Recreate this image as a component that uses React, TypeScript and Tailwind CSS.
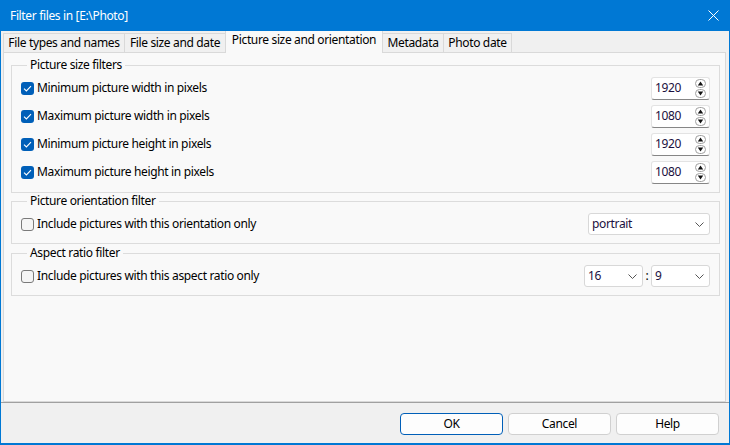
import React from "react"

const font = { fontFamily: '"Noto Sans", "Open Sans", sans-serif' }

function CheckBox({ checked }: { checked: boolean }) {
  return checked ? (
    <span className="flex h-[13px] w-[13px] shrink-0 items-center justify-center rounded-[3px] bg-[#005fb8]">
      <svg width="9" height="7" viewBox="0 0 9 7">
        <path d="M1 3.6 L3.4 6 L8 1.2" fill="none" stroke="white" strokeWidth="1.1" />
      </svg>
    </span>
  ) : (
    <span className="h-[13px] w-[13px] shrink-0 rounded-[3px] border border-[#7a7a7a] bg-[#f5f5f5]" />
  )
}

function SpinBox({ value }: { value: string }) {
  return (
    <div className="flex h-[23px] w-[59px] items-center justify-between rounded-[3px] border border-[#e3e3e3] border-b-[#868686] bg-white pl-[3px] pr-[3px]">
      <span className="text-[12px] text-[#1b1040]">{value}</span>
      <svg width="11" height="19" viewBox="0 0 11 19">
        <rect x="0.5" y="0.5" width="10" height="8" rx="4" fill="white" stroke="#a0a0a0" />
        <path d="M2.8 6.4 L8.2 6.4 L5.5 2.6 Z" fill="#111" />
        <rect x="0.5" y="10.5" width="10" height="8" rx="4" fill="white" stroke="#a0a0a0" />
        <path d="M2.8 12.6 L8.2 12.6 L5.5 16.4 Z" fill="#111" />
      </svg>
    </div>
  )
}

function Combo({ value, width }: { value: string; width: string }) {
  return (
    <div className={`flex h-[22px] ${width} items-center justify-between rounded-[3px] border border-[#d8d8d8] bg-white pl-[3px] pr-[5px]`}>
      <span className="text-[12px] text-[#1b1040]">{value}</span>
      <svg width="9" height="5" viewBox="0 0 9 5">
        <path d="M0.5 0.5 L4.5 4.5 L8.5 0.5" fill="none" stroke="#555" strokeWidth="1" />
      </svg>
    </div>
  )
}

function Group({ title, className, children }: { title: string; className: string; children: React.ReactNode }) {
  return (
    <fieldset className={`border border-[#dcdcdc] px-[9px] ${className}`}>
      <legend className="ml-[6px] px-[3px] text-[12px] leading-[16px]">{title}</legend>
      {children}
    </fieldset>
  )
}

const sizeRows = [
  { label: "Minimum picture width in pixels", value: "1920" },
  { label: "Maximum picture width in pixels", value: "1080" },
  { label: "Minimum picture height in pixels", value: "1920" },
  { label: "Maximum picture height in pixels", value: "1080" },
]

const tabs = [
  { label: "File types and names", w: "w-[122px]" },
  { label: "File size and date", w: "w-[102px]" },
  { label: "Picture size and orientation", w: "w-[158px]", active: true },
  { label: "Metadata", w: "w-[62px]" },
  { label: "Photo date", w: "w-[69px]" },
]

export default function App() {
  return (
    <div
      style={font}
      className="flex h-[445px] w-[730px] flex-col border-x border-b-2 border-[#0078d4] bg-[#f0f0f0] text-[12px] tracking-[-0.35px] text-black"
    >
      {/* title bar */}
      <div className="flex h-[31px] shrink-0 items-center justify-between bg-[#0078d4] pl-[9px] pr-[10px] text-white">
        <span className="text-[12px]">Filter files in [E:\Photo]</span>
        <svg width="11" height="11" viewBox="0 0 11 11">
          <path d="M0.5 0.5 L10.5 10.5 M10.5 0.5 L0.5 10.5" stroke="white" strokeWidth="1" />
        </svg>
      </div>

      {/* tabs */}
      <div className="flex h-[21px] shrink-0 items-end pl-[2px]">
        {tabs.map((t, i) =>
          t.active ? (
            <div
              key={t.label}
              className={`relative z-10 -mb-px -ml-px flex h-[22px] ${t.w} items-start justify-center border-x border-[#d9d9d9] bg-[#f9f9f9] pt-[1px] leading-[16px]`}
            >
              {t.label}
            </div>
          ) : (
            <div
              key={t.label}
              className={`flex h-[19px] ${t.w} items-center justify-center border border-b-0 border-[#d9d9d9] leading-[16px] ${i > 0 ? "-ml-px" : ""}`}
            >
              {t.label}
            </div>
          ),
        )}
      </div>

      {/* tab page */}
      <div className="ml-[2px] mr-[3px] flex min-h-0 flex-1 flex-col border border-[#d9d9d9] bg-[#f9f9f9] pl-[7px] pr-[5px] pt-[4px]">
        <Group title="Picture size filters" className="pb-[6px]">
          <div className="pt-[1px]">
            {sizeRows.map((r) => (
              <div key={r.label} className="flex h-[28px] items-center justify-between">
                <div className="flex items-center gap-[3px]">
                  <CheckBox checked />
                  <span>{r.label}</span>
                </div>
                <SpinBox value={r.value} />
              </div>
            ))}
          </div>
        </Group>

        <Group title="Picture orientation filter" className="pb-[5px]">
          <div className="flex h-[29px] items-center justify-between pt-[1px]">
            <div className="flex items-center gap-[3px]">
              <CheckBox checked={false} />
              <span>Include pictures with this orientation only</span>
            </div>
            <Combo value="portrait" width="w-[122px]" />
          </div>
        </Group>

        <Group title="Aspect ratio filter" className="mt-[1px] pb-[5px]">
          <div className="flex h-[29px] items-center justify-between pt-[1px]">
            <div className="flex items-center gap-[3px]">
              <CheckBox checked={false} />
              <span>Include pictures with this aspect ratio only</span>
            </div>
            <div className="flex items-center">
              <Combo value="16" width="w-[59px]" />
              <span className="w-[8px] text-center">:</span>
              <Combo value="9" width="w-[59px]" />
            </div>
          </div>
        </Group>
      </div>

      {/* buttons */}
      <div className="shrink-0 border-t border-[#a0a0a0] pb-[8px] pr-[10px] pt-[10px]">
        <div className="flex justify-end gap-[5px]">
          <button className="h-[22px] w-[103px] rounded-[4px] border border-[#005fb8] bg-[#fdfdfd] text-[12px]">OK</button>
          <button className="h-[22px] w-[103px] rounded-[4px] border border-[#d0d0d0] bg-[#fdfdfd] text-[12px]">Cancel</button>
          <button className="h-[22px] w-[103px] rounded-[4px] border border-[#d0d0d0] bg-[#fdfdfd] text-[12px]">Help</button>
        </div>
      </div>
    </div>
  )
}
